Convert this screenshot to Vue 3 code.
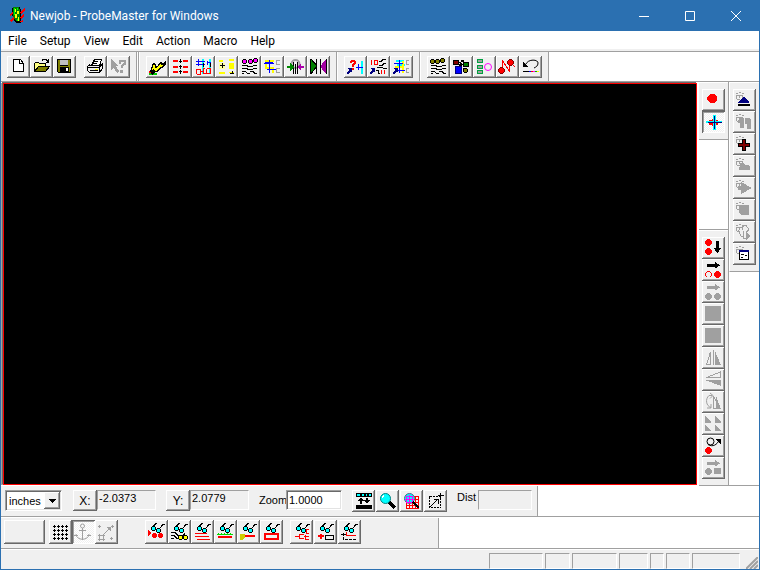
<script setup>
import { ref, h } from 'vue'

const K = '#000', R = '#f00', C = '#0ff', G = '#a0a0a0', N = '#000080', B = '#00f', M = '#f0f', Y = '#ff0', O = '#808000', W = '#fff'
const f = (fill, d) => ({ fill, d, stroke: 'none' })
const s = (stroke, d, w = 1) => ({ fill: 'none', stroke, d, 'stroke-width': w })
const fs = (fill, stroke, d) => ({ fill, stroke, d, 'stroke-width': 1 })
const smooth = p => ({ ...p, 'shape-rendering': 'auto' })
const o = (x, y, r) => `M${x - r} ${y}a${r} ${r} 0 1 0 ${2 * r} 0a${r} ${r} 0 1 0 ${-2 * r} 0z`
// Stepped discs, 7 and 5 pixels across, centred on pixel (x, y)
const disc7 = (x, y) => `M${x - 1} ${y - 3}h3v1h1v1h1v3h-1v1h-1v1h-3v-1h-1v-1h-1v-3h1v-1h1z`
const disc5 = (x, y) => `M${x - 1} ${y - 2}h3v1h1v3h-1v1h-3v-1h-1v-3h1z`
const bead = (c, x, y) => [f(K, disc5(x, y)), f(c, `M${x - 1} ${y - 1}h3v3h-3z`)]

const glasses = [
  s(K, 'M6.500 8V6.500L10 3.500l1-1h1M14.500 8l3-4 1-.500h1M9 8.500h3'),
  ...bead(C, 8, 7), ...bead(C, 13, 9),
]
const antenna = c => s(c, 'M3 4.500h2M6 3.500h2M9 4.500h2M3.500 10V6.500h6v2M6.500 6v3M4 10.500h3')
const traces = s(K, 'M4 9.500h4l3 1h3l2-1h3M4 12.500h4l3 1h3l2-1h3M4 15.500h3l3 2h2M12 15.500h3l2 2h2M4 17.500h2')
const arrow = [f(N, 'M3 12h5v5z'), s(N, 'M3 18l3-3', 2)]

const icons = {
  fresh: [fs(W, K, 'M6.500 3.500h7l3 4v8h-10z'), s(K, 'M12.500 3.500v4h4')],
  open: [fs('#ffff80', K, 'M4.500 15.500v-8l1-1h3l1 1h6v3'), fs(O, K, 'M4.500 15.500l4-5h11l-4 5z'), s(K, 'M12 4.500l1-1h3l2 2M18.500 3v3.500h-3')],
  save: [f(K, 'M4 3h14v14H5l-1-1z'), f(O, 'M5 4h2v6h8V4h2v12H5z'), f('#c0c0c0', 'M7 4h8v5H7z'), f(K, 'M7 11h9v5H7z'), f(W, 'M13 12h2v3h-2z')],
  print: [fs(W, K, 'M7.500 9.500l3-6h7l-2 6z'), s(K, 'M10 5.500h4M9 7.500h4'), fs('#f0f0f0', K, 'M3.500 10.500l2-2v1h10l3-2v5l-3 4h-10l-2-2z'), s(K, 'M4 11.500h11l3-3M15.500 12v4M6 14.500h8'), f(Y, 'M11 13h3v1h-3z')],
  help: [f(G, 'M4 3l8 7H9l3 5-2 2-3-5-3 2z'), s(G, 'M12.500 8V4.500h5V8l-3 2v2', 2), f(G, 'M13 14h3v3h-3z')],
  route: [f('#0c0', 'M3 17h8v2H3z'), f(R, 'M3 15h5v2H3z'), f(K, 'M4 15l3-8h2l2 4 3-5h1l2 2 3-4v4l-3 4h-2l-3 4H9l-3 3z'), f(Y, 'M6 14l2-6 2 5 4-5 2 2 3-4-3 5h-2l-3 4H9l-1-2z')],
  pads: [f(R, 'M4 4h5v2H4zM14 4h5v2h-5zM4 10h5v2H4zM14 10h5v2h-5zM4 15h5v2H4zM14 15h5v2h-5z'), f(K, 'M11 3h1v4h-1zM11 9h1v4h-1zM11 14h1v4h-1zM10 5h3v1h-3zM10 10h3v1h-3zM10 15h3v1h-3z')],
  nets: [f(C, 'M10 3h2v15h-2zM17 3h2v15h-2z'), s(B, 'M4 5.500h9M6.500 3v7M4 8.500h9M15 6.500h4M15.500 5v4'), s(R, 'M4.500 18v-5h4v5h-4M9 15.500h2M13 12.500h-2v5h3v-5M15 12.500h3v5h-3'), s(K, 'M11.500 7v4M18.500 7v4')],
  yellow: [f(Y, 'M4 4h4v2H4zM14 3h5v2h-5zM14 7h5v6h-5zM4 16h6v2H4zM14 16h5v1h-5z'), f('#ffffa0', 'M4 7h6v6H4z'), s(K, 'M5 9.500h5M7.500 7v5M15 17.500h4M17.500 15v3')],
  probes: [traces, ...bead(M, 6, 5), ...bead(M, 12, 5), ...bead(M, 17, 4)],
  cross: [f(Y, 'M4 4h9v2H6v5h7v6h-2v-4H4z'), s(B, 'M3 7.500h10M8.500 4v13M6 13.500h9'), s(B, 'M4 6.500h8'), s(G, 'M19 4.500h-4v4h4M19 12.500h-4v4h4')],
  caliper: [smooth(s(G, o(11.500, 8, 4), 2)), s(K, 'M9.500 6v12M13.500 6v12M11.500 8v10'), f('#080', 'M3 10h3V7l4 4-4 4v-3H3z'), f('#a0a', 'M20 10h-3V7l-4 4 4 4v-3h3z')],
  mirror: [f('#008000', 'M4 3l6 7.500L4 18z'), f('#a000a0', 'M19 3l-6 7.500 6 7.500z'), s(K, 'M3.500 3v15M19.500 3v15M9.500 3v15M13.500 3v15M4 3l6 7-6 8')],
  query: [f(R, 'M6 5h1V4h4v1h1v3h-1v1h-1v2H8V8h1V7h1V6H8v1H6zM8 12h2v2H8z'), f(C, 'M17 5h2v13h-2z'), s(B, 'M12 11.500h7M14.500 8v6'), ...arrow],
  ioNet: [s(R, 'M4.500 4v5M7.500 4.500h3v4h-3zM14.500 14v4M17.500 14v4'), s(K, 'M12 5.500h2l2-2h3M12 9.500h3l2-2h2M10 11.500h5l2 1h3M9 14.500h2v3h2'), ...arrow],
  crossNet: [f(C, 'M6 4h8v2H6zM7 8h8v2H7z'), f(Y, 'M5 10h9v2H5zM12 5h2v12h-2z'), s(B, 'M4 7.500h9M9.500 4v13M8 14.500h7'), s(G, 'M19 4.500h-3v4h3M19 12.500h-3v4h3'), ...arrow],
  oliveTraces: [traces, ...bead(O, 5, 5), ...bead(O, 10, 5), ...bead(O, 15, 4)],
  shapes: [s(K, 'M9 6l4 3M13 12l3 3M12 4.500h2'), fs('#800000', K, 'M3.500 4.500h5v4h-5z'), fs('#008000', K, 'M13.500 6.500h5v4h-5z'), fs(B, N, 'M5.500 10.500h6v7h-6z'), f(K, 'M9 8h3v2H9zM11 4h3v2h-3z'), ...bead(O, 15, 14)],
  list: [fs(G, '#00a040', 'M4.500 3.500h5v3h-5z'), fs(G, '#00a040', 'M4.500 9.500h5v3h-5z'), fs(G, '#00a040', 'M4.500 14.500h5v3h-5z'), smooth(s(M, o(15, 11, 3.500)))],
  zigzag: [s(R, 'M6.500 14V4.500l7 11V7M15 7l4 4'), f('#800000', disc7(14, 6)), f(R, disc5(14, 6)), f('#800000', disc7(5, 14)), f(R, disc5(5, 14))],
  undo: [smooth(s(K, 'M7 8c2-5 12-5 12-1 0 3-2 4-4 5')), f(K, 'M4 6v5h6z'), s(K, 'M4 15.500h6'), s(B, 'M10 15.500h2'), s(R, 'M12 15.500h2'), s(M, 'M14 15.500h2'), s('#0a0', 'M16 15.500h2'), s(Y, 'M18 15.500h2')],
  dot: [f(R, 'M8 5h4l3 3v3l-3 3H8l-2-2-1-2 1-3z')],
  target: [f(R, disc7(11, 11)), f(R, 'M7 9h9v5H7z'), f(C, 'M11 4h3v15h-3zM4 10h16v2H4z'), s(N, 'M12.500 5v13M6 11.500h14')],
  up: [antenna(G), f(N, 'M10 8h1l5 5v1H5v-1z'), f(K, 'M5 15h12v2H5z')],
  pair: [antenna(G), f(G, 'M5 9l2-2h4v10H7v-5H5zM12 7h4l2 2v9h-4v-5h-2z')],
  plus: [antenna(G), fs('#800000', K, 'M9.500 6.500h3v4h4v3h-4v4h-3v-4h-4v-3h4z')],
  shape: [antenna(G), f(G, 'M7 8h3l2 2h4l1 2v3H6v-3h1z')],
  play: [antenna(G), f(G, 'M8 5l11 6-11 6v-4H5V9h3z')],
  stop: [antenna(G), f(G, 'M6 8l2-2h8v10H8l-2-2z')],
  step: [antenna(G), s(G, 'M5 9l3 6h3M9 6l4-2 3 5-3 2 2 4M10 10v7h4'), f(G, 'M13 11l5 4-5 4z')],
  panel: [antenna(G), fs(W, K, 'M6.500 7.500h9v9h-9z'), f(N, 'M6 7h10v2H6z'), s(K, 'M8 11.500h3M12 12.500h2M8 14.500h2')],
  redDown: [f(R, disc7(6, 5)), f(R, disc7(6, 14)), f(K, 'M14 4h3v7h2l-3 5h-1l-3-5h2z')],
  redRight: [f(K, 'M5 5h8V3l5 3.500-5 3V8H5z'), f(R, disc7(6, 15)), f('#f0f0f0', disc5(6, 15)), f('#f0f0f0', 'M5 18h3v1H5z'), f(R, disc7(15, 15))],
  grayRight: [f(G, 'M5 5h8V3l5 3.500-5 3V8H5z'), f(G, disc7(6, 15)), f(G, disc7(15, 15))],
  block: [f(G, 'M3 3h16v15H3z')],
  flipH: [s(G, 'M4.500 17.500h4V5zM11.500 3v15'), f(G, 'M13 4l6 14h-6z')],
  flipV: [s(G, 'M4.500 8.500h14V3z'), f(G, 'M3 11h16v6z')],
  rotate: [smooth(s(G, 'M10 4.500H7C3 8 4 15 9 16.500M8 2l3 2.500-3 3M9 13v4H5')), s(G, 'M11.500 17.500V5l6 12.500z'), f(G, 'M14 5l5 13h-5z')],
  corners: [f(G, 'M3 3l6 6v1H3zM13 3l6 6v1h-6zM3 12l6 5v1H3zM13 12l6 5v1h-6z')],
  loop: [smooth(s(K, o(8.500, 6.500, 3.500), 1)), smooth(s(K, 'M6 9.500c5 3 9 0 11-4')), f(K, 'M13 4h6v5z'), f(R, disc7(6, 15))],
  grayShapes: [f(G, 'M5 5h8V3l5 3.500-5 3V8H5z'), f(G, disc7(6, 14)), f(G, 'M12 11h7v6h-7z')],
  fit: [f(K, 'M4 3h16v4H4zM4 15h16v4H4zM9 7l3 4h-2v3H8v-3H6zM15 14l-3-4h2V8h2v2h2z'), f(C, 'M5 4h3v2H5zM10 4h2v2h-2zM14 4h1v2h-1zM17 4h2v2h-2z')],
  glass: [s(K, 'M13 12l6 6', 3), smooth(fs(C, '#008080', o(9.500, 8.500, 5))), s(W, 'M6 8l2-3')],
  glassGrid: [s(R, 'M6.500 7v12M9.500 7v12M12.500 6v13M15.500 6v13M18.500 6v13M6 6.500h13M6 9.500h13M6 12.500h13M6 15.500h13M6 18.500h13'), smooth(fs(C, '#606080', o(9.500, 8.500, 5))), s(M, 'M6.500 6v6M9.500 5v8M12.500 6v6M6 6.500h7M5 9.500h9M6 12.500h6'), s(K, 'M13 12l6 6', 2)],
  area: [{ ...s(K, 'M5.500 6.500h11v11h-11z'), 'stroke-dasharray': '2 1' }, s(K, 'M6 17l8-8M16.500 3v6M14 5.500h6M10 9.500h4v4')],
  grid: [s(K, [5, 9, 13, 17].map(y => `M4 ${y + .5}h15`).join('')), s(K, [5, 9, 13, 17].map(x => `M${x + .5} 4v15`).join('')), f('#f0f0f0', [7, 11, 15].map(x => `M${x} 4h1v15h-1z`).join('') + [7, 11, 15].map(y => `M4 ${y}h15v1h-15z`).join(''))],
  anchor: [smooth(s(G, o(10.500, 5, 2))), smooth(s(G, 'M4 13c0 7 13 7 13 0')), s(G, 'M10.500 7v12M7 9.500h7M2 14.500h4M15 14.500h4')],
  snap: [s(G, 'M3 5.500h3M4.500 4v3M16 5.500h3M17.500 4v3M3 14.500h7M3 18.500h7M4.500 13v7M8.500 13v7M15 17.500h3M16.500 16v3M9 13l6-6'), f(G, 'M11 6h5v5z')],
  gDots: [...glasses, f(R, 'M3 9l3 3-3 3z'), f(R, disc5(9, 14)), f(R, disc5(15, 14))],
  gTraces: [...glasses, s(K, 'M3 11.500h4l3 3h5l2-2M3 14.500h3l3 3h9M3 17.500h3'), ...bead(Y, 12, 16), ...bead(Y, 17, 16)],
  gLines: [...glasses, s(R, 'M4 12.500h12M4 15.500h14M6 18.500h13')],
  gGrass: [...glasses, s('#0d0', 'M3 13.500h16M4 12.500h1M7 12.500h1M10 12.500h1M13 12.500h1M16 12.500h1'), f(R, 'M4 15h14v2H4z')],
  gKey: [...glasses, f('#cc0', 'M3 13h5v3l-2 3H3z'), f(R, 'M8 14h10v2H8z')],
  gRect: [...glasses, s(R, 'M5 13h13v5H5z', 2)],
  gNet: [...glasses, s(R, 'M5 15.500h4M9.500 13v5M10 13.500h4M10 17.500h4M14 15.500h5M19 8.500h-3v4h3M19 18.500h-4v-5')],
  gPlus: [...glasses, s(R, 'M4 15h6M7 13v5', 2), s(K, 'M11.500 14.500h8v4h-8z')],
  gDash: [...glasses, s(R, 'M8.500 11v3.500h9'), { ...s(K, 'M5.500 12v6.500h13'), 'stroke-dasharray': '3 1' }, s(K, 'M3 13.500h5')],
}

const Glyph = props => h('svg', { viewBox: '0 0 23 22', width: 23, height: 22, 'shape-rendering': 'crispEdges', 'aria-hidden': 'true' },
  icons[props.name].map(p => h('path', p)))
Glyph.props = ['name']

const menus = ['File', 'Setup', 'View', 'Edit', 'Action', 'Macro', 'Help']
const bands = [
  [['fresh', 'open', 'save'], ['print', 'help']],
  [['route', 'pads', 'nets', 'yellow', 'probes', 'cross', 'caliper', 'mirror']],
  [['query', 'ioNet', 'crossNet']],
  [['oliveTraces', 'shapes', 'list', 'zigzag', 'undo']],
]
const modeTools = ['dot', 'target']
const editTools = ['redDown', 'redRight', 'grayRight', 'block', 'block', 'flipH', 'flipV', 'rotate', 'corners', 'loop', 'grayShapes']
const macroTools = ['up', 'pair', 'plus', 'shape', 'play', 'stop', 'step', 'panel']
const zoomTools = ['fit', 'glass', 'glassGrid', 'area']
const snapTools = ['grid', 'anchor', 'snap']
const viewTools = ['gDots', 'gTraces', 'gLines', 'gGrass', 'gKey', 'gRect']
const netTools = ['gNet', 'gPlus', 'gDash']
const panes = [54, 25, 45, 29, 14, 24, 48]

const unit = ref('inches')
const x = ref('-2.0373')
const y = ref('2.0779')
const zoom = ref('1.0000')
const dist = ref('')
</script>

<template>
  <div class="window">
    <header class="title">
      <svg class="logo" width="17" height="17" viewBox="0 0 17 17" shape-rendering="crispEdges" aria-hidden="true">
        <path fill="#000" d="M5 0h6l1 4v12H7l-3-3V9H3V1z" />
        <path fill="#008000" d="M4 0h6l1 3v11H7L4 9z" />
        <path fill="#ff0" d="M6 2h1v3H6zM8 4h2v3H8zM6 7h2v4H6zM9 10h1v4H9z" />
        <path fill="#0f0" d="M5 1h1v7H5zM8 1h1v2H8zM8 12h1v2H8z" />
        <path fill="#f00" d="M0 8l4-4v2L1 9zM1 13l4-3v2l-3 3zM11 5l5-4v2l-4 4zM11 10l4-3v2l-3 3zM11 14l3-1v2h-3z" />
      </svg>
      <h1>Newjob - ProbeMaster for Windows</h1>
      <div class="controls">
        <button aria-label="Minimize"><svg width="10" height="10"><path d="M0 5.500h10" /></svg></button>
        <button aria-label="Maximize"><svg width="10" height="10"><path d="M.5 .5h9v9h-9z" /></svg></button>
        <button aria-label="Close"><svg width="10" height="10"><path d="M0 0l10 10M10 0L0 10" /></svg></button>
      </div>
    </header>

    <nav class="menu"><button v-for="m in menus" :key="m">{{ m }}</button></nav>

    <div class="bands">
      <template v-for="(band, i) in bands" :key="i">
        <div class="band">
          <div v-for="(group, j) in band" :key="j" class="group">
            <button v-for="n in group" :key="n" class="tool" :aria-label="n"><Glyph :name="n" /></button>
          </div>
        </div>
        <div v-if="i === 0" class="grip"></div>
      </template>
    </div>

    <main class="work">
      <div class="canvas"></div>
      <aside class="rail">
        <div class="stack first">
          <button v-for="n in modeTools" :key="n" class="tool" :class="{ pressed: n === 'target' }" :aria-label="n"><Glyph :name="n" /></button>
        </div>
        <div class="stack last">
          <button v-for="(n, i) in editTools" :key="i" class="tool" :aria-label="n"><Glyph :name="n" /></button>
        </div>
      </aside>
      <aside class="rail macros">
        <div class="stack first">
          <button v-for="n in macroTools" :key="n" class="tool" :aria-label="n"><Glyph :name="n" /></button>
        </div>
      </aside>
    </main>

    <div class="row">
      <div class="bar readouts">
        <div class="units sunken">
          <select v-model="unit" aria-label="Units"><option>inches</option><option>mils</option><option>mm</option></select>
          <span class="drop"><svg width="7" height="4" shape-rendering="crispEdges"><path d="M0 0h7L4 4H3z" /></svg></span>
        </div>
        <div class="axis"><button class="tool">X:</button><input v-model="x" class="field" aria-label="X" readonly></div>
        <div class="axis"><button class="tool">Y:</button><input v-model="y" class="field" aria-label="Y" readonly></div>
        <div class="zoom"><label for="zoom">Zoom</label><input id="zoom" v-model="zoom" class="sunken"></div>
        <div class="group wide">
          <button v-for="n in zoomTools" :key="n" class="tool" :aria-label="n"><Glyph :name="n" /></button>
        </div>
        <div class="dist"><label for="dist">Dist</label><input id="dist" v-model="dist" class="field" readonly></div>
      </div>
    </div>

    <div class="row lower">
      <div class="bar views">
        <button class="tool blank" aria-label="Layer"></button>
        <div class="group">
          <button v-for="n in snapTools" :key="n" class="tool" :class="{ pressed: n === 'anchor' }" :aria-label="n"><Glyph :name="n" /></button>
        </div>
        <div class="group looks">
          <button v-for="n in viewTools" :key="n" class="tool" :aria-label="n"><Glyph :name="n" /></button>
        </div>
        <div class="group wide">
          <button v-for="n in netTools" :key="n" class="tool" :aria-label="n"><Glyph :name="n" /></button>
        </div>
      </div>
    </div>

    <footer class="status">
      <div v-for="(w, i) in panes" :key="i" class="pane" :style="{ width: w + 'px' }"></div>
      <svg class="size" width="12" height="12" aria-hidden="true"><path stroke="#a0a0a0" stroke-width="2" d="M0 12L12 0M4 12l8-8M8 12l4-4" /></svg>
    </footer>
  </div>
</template>

<style>
body { margin: 0; }
</style>

<style scoped>
* { box-sizing: border-box; }
button, input, select { font: inherit; color: inherit; margin: 0; padding: 0; border: 0; border-radius: 0; background: none; }
svg { display: block; flex: none; }

.window {
  display: flex;
  flex-direction: column;
  min-height: 100vh;
  border: solid #2b70b1;
  border-width: 0 1px 1px;
  background: #fff;
  color: #000;
  font: 11px/14px "Liberation Sans", sans-serif;
}

.title { display: flex; align-items: center; height: 31px; padding-left: 8px; background: #2b70b1; color: #fff; font: 12px/16px Roboto, sans-serif; }
.title h1 { margin: 0 auto 0 4px; font: inherit; }
.controls { display: flex; align-self: stretch; }
.controls button { display: grid; place-items: center; width: 46px; }
.controls path { fill: none; stroke: #fff; }

.menu { display: flex; height: 21px; border-bottom: 1px solid #a0a0a0; box-shadow: inset 0 -2px #f0f0f0; font: 12px/19px Roboto, sans-serif; }
.menu button { padding: 0 7px 0 6px; }

.menu { padding-left: 1px; }

.bands { display: flex; height: 30px; border-bottom: 1px solid #a0a0a0; }
.band { display: flex; gap: 8px; padding: 4px 6px; border-right: 1px solid #a0a0a0; background: #f0f0f0; }
.band + .band, .grip + .band { border-left: 1px solid #fff; }
.grip { width: 2px; border-left: 1px solid #fff; border-right: 1px solid #a0a0a0; }
.group { display: flex; }
.group.wide { gap: 1px; }

.tool {
  display: grid;
  place-items: center;
  flex: none;
  width: 23px;
  height: 22px;
  overflow: hidden;
  background: #f0f0f0;
  box-shadow: inset -1px -1px #696969, inset 1px 1px #fff, inset -2px -2px #a0a0a0;
}
.pressed {
  background: repeating-conic-gradient(#fff 0 25%, #f0f0f0 0 50%) 0 0 / 2px 2px;
  box-shadow: inset 1px 1px #696969, inset -1px -1px #fff, inset 2px 2px #a0a0a0;
}

.work { display: flex; flex: 1; }
.canvas { flex: 1; border: 1px solid #f00; background: #000; margin: 1px 2px 1px 2px; box-shadow: -1px -1px #696969, -2px 0 #a0a0a0; }
.rail { display: flex; flex-direction: column; justify-content: space-between; border-right: 1px solid #a0a0a0; border-bottom: 1px solid #a0a0a0; }
.rail.macros { border-right: 0; }
.stack { display: flex; flex-direction: column; padding: 6px 3px; background: #f0f0f0; }
.stack.first { border-top: 1px solid #fff; border-bottom: 1px solid #a0a0a0; }
.stack.last { border-top: 1px solid #a0a0a0; box-shadow: inset 0 1px #fff; padding-top: 7px; }
.macros .stack { border-left: 1px solid #fff; }

.row { display: flex; border-bottom: 1px solid #a0a0a0; }
.bar { display: flex; background: #f0f0f0; border-right: 1px solid #a0a0a0; }
.readouts { height: 30px; padding: 4px 5px 4px 4px; gap: 10px; }
.sunken { background: #fff; border: 1px solid; border-color: #a0a0a0 #fff #fff #a0a0a0; box-shadow: inset 1px 1px #696969, inset -1px -1px #e3e3e3; }
.units { display: grid; width: 57px; height: 21px; margin-right: 1px; padding: 1px; }
.units select { grid-area: 1 / 1; appearance: none; padding-left: 2px; outline: 0; }
.drop { grid-area: 1 / 1; justify-self: end; display: grid; place-items: center; width: 16px; background: #f0f0f0; box-shadow: inset -1px -1px #696969, inset 1px 1px #fff, inset -2px -2px #a0a0a0; pointer-events: none; }
.axis { display: flex; }
.axis .tool { width: 24px; height: 21px; font-size: 12px; }
.field { width: 59px; height: 20px; padding: 0 0 4px 1px; border: 1px solid; border-color: #a0a0a0 #fff #fff #a0a0a0; background: #f0f0f0; }
.zoom { display: flex; }
.zoom label { line-height: 20px; width: 27px; }
.zoom input { width: 56px; height: 20px; padding-left: 2px; }
.dist { display: flex; }
.dist label { width: 21px; }
.dist .field { width: 54px; }

.lower { border-top: 1px solid #fff; }
.views { height: 30px; padding: 2px 77px 4px 3px; }
.views .tool { height: 24px; }
.views .blank { width: 41px; margin-right: 4px; }
.looks { margin: 0 7px 0 27px; }

.status { display: flex; gap: 2px; justify-content: flex-end; height: 20px; padding: 3px 1px 0 0; background: #f0f0f0; border-top: 1px solid #fff; }
.pane { border: 1px solid; border-color: #a0a0a0 #fff #fff #a0a0a0; }
.size { align-self: flex-end; margin-left: 4px; }
</style>
